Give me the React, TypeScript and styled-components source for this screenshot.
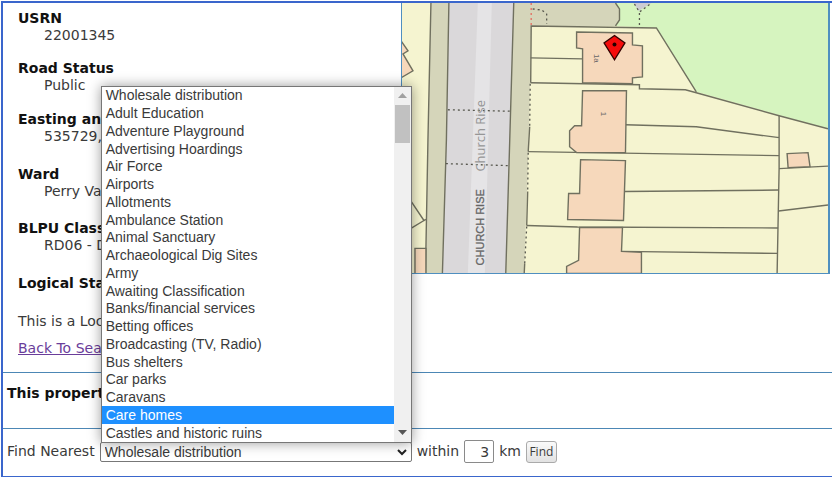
import React, { useState } from "react";
import styled, { createGlobalStyle } from "styled-components";

const GlobalStyle = createGlobalStyle`
  body {
    margin: 0;
    background: #fff;
    color: #3a3a3a;
    font: 14px/17px "DejaVu Sans", Verdana, sans-serif;
  }
  *, *::before, *::after { box-sizing: border-box; }
`;

const Page = styled.main`
  margin: 1px 0 0 1px;
  border: solid #3a66cc;
  border-width: 2px 0 1px 2px;
  overflow: hidden;
`;

const Summary = styled.section`
  display: grid;
  grid-template-columns: minmax(0, 398fr) minmax(0, 429fr);
  align-items: start;
  padding-right: 2px;
`;

const Details = styled.div`
  padding: 7px 0 15px 15px;
`;

const PropertyList = styled.dl`
  margin: 0;
`;

const Property = styled.div<{ $gap: number }>`
  margin-bottom: ${(p) => p.$gap}px;
`;

const Term = styled.dt`
  color: #111;
  font-weight: bold;
`;

const Value = styled.dd`
  margin: 0 0 0 26px;
`;

const Note = styled.p`
  margin: 0 0 10px;
`;

const BackLink = styled.a`
  color: #6a3d9a;
  text-decoration: underline;
`;

const MapFrame = styled.div`
  display: flex;
  border: solid #4f8fc0;
  border-width: 0 2px 1px 1px;
`;

const MapDrawing = styled.svg`
  display: block;
  width: 100%;
  height: auto;
`;

const Status = styled.section`
  border-top: 1px solid #4c87b5;
  padding: 12px 4px 26px;
`;

const Heading = styled.h2`
  margin: 0;
  color: #111;
  font-size: 14px;
  line-height: 17px;
`;

const FindForm = styled.form`
  display: flex;
  align-items: center;
  gap: 5px;
  border-top: 1px solid #4c87b5;
  padding: 11px 4px 13px;
`;

const Picker = styled.div`
  position: relative;
  width: 312px;
  height: 20px;
`;

const TypeSelect = styled.select`
  display: block;
  appearance: none;
  width: 100%;
  height: 20px;
  margin: 0;
  padding: 0 4px;
  border: 1px solid #777;
  border-radius: 2px;
  background: #fff;
  color: #3a3a3a;
  font: 14px "Liberation Sans", Arial, sans-serif;
`;

const SelectArrow = styled.svg`
  position: absolute;
  right: 5px;
  top: 6px;
  pointer-events: none;
`;

const Popup = styled.div`
  position: absolute;
  left: 1px;
  right: 0;
  bottom: 19px;
  display: flex;
  height: 357px;
  border: 1px solid #777;
  background: #fff;
  box-shadow: 0 0 12px rgba(0, 0, 0, 0.4);
`;

const Options = styled.ul`
  flex: 1;
  display: grid;
  grid-auto-rows: 1fr;
  margin: 0;
  padding: 0;
  list-style: none;
`;

const Option = styled.li<{ $active: boolean }>`
  display: flex;
  align-items: center;
  padding-left: 4px;
  background: ${(p) => (p.$active ? "#1e90ff" : "#fff")};
  color: ${(p) => (p.$active ? "#fff" : "#3a3a3a")};
  font: 14px/16px "Liberation Sans", Arial, sans-serif;
  cursor: default;
`;

const ScrollBar = styled.div`
  display: flex;
  flex-direction: column;
  width: 17px;
  padding: 0 1px;
  background: #f0f0f0;
`;

const ScrollButton = styled.button`
  display: grid;
  place-items: center;
  height: 18px;
  padding: 0;
  border: 0;
  background: transparent;
`;

const Thumb = styled.div`
  height: 38px;
  background: #c1c1c1;
`;

const Track = styled.div`
  flex: 1;
`;

const Distance = styled.input`
  width: 30px;
  height: 23px;
  padding: 0 4px;
  border: 1px solid #8a8a8a;
  border-radius: 2px;
  color: #3a3a3a;
  font: 14px "DejaVu Sans", Verdana, sans-serif;
  text-align: right;
`;

const FindButton = styled.button`
  width: 31px;
  height: 22px;
  padding: 0;
  border: 1px solid #aaa;
  border-radius: 3px;
  background: linear-gradient(#fafafa, #e2e2e2);
  color: #3a3a3a;
  font: 12px "Open Sans", sans-serif;
`;

const properties = [
  { term: "USRN", value: "22001345", gap: 16 },
  { term: "Road Status", value: "Public", gap: 17 },
  { term: "Easting and Northing", value: "535729,", gap: 21 },
  { term: "Ward", value: "Perry Vale", gap: 20 },
  { term: "BLPU Classification", value: "RD06 - Dwelling", gap: 21 },
  { term: "Logical Status", value: "", gap: 21 },
];

const types = [
  "Wholesale distribution",
  "Adult Education",
  "Adventure Playground",
  "Advertising Hoardings",
  "Air Force",
  "Airports",
  "Allotments",
  "Ambulance Station",
  "Animal Sanctuary",
  "Archaeological Dig Sites",
  "Army",
  "Awaiting Classification",
  "Banks/financial services",
  "Betting offices",
  "Broadcasting (TV, Radio)",
  "Bus shelters",
  "Car parks",
  "Caravans",
  "Care homes",
  "Castles and historic ruins",
];

function StreetMap() {
  return (
    <MapDrawing viewBox="402 3 427 271" role="img" aria-label="Map of Church Rise">
      <rect x="402" y="3" width="427" height="271" fill="#f5f4d0" />
      <path d="M431 3H449L446.5 140L442.5 274H425.5L428 140Z" fill="#d5d5ba" />
      <path d="M449 3H514L510 140L506 274H442.5L446.5 140Z" fill="#dad8da" />
      <path d="M478 3H492L485 274H468Z" fill="#e5e4e6" />
      <path d="M514 3H616L620 9V20L616 26H531.5L529 140L524.5 274H506L510 140Z" fill="#d5d5ba" />
      <path d="M616 3H829V129L697 92L657 28L616 26L620 20V9Z" fill="#d6f4bf" />
      <path d="M634 3L639 11L652 3Z" fill="#ccccd2" />
      <g fill="none" stroke="#70705f" strokeWidth="1.4">
        <path d="M431 3L428 140L425.5 274M449 3L446.5 140L442.5 274M514 3L510 140L506 274" />
        <path d="M616 3L620 9V20L616 26M531 83L531.5 26L657 28L697 92" />
        <path d="M531 58L583 59M531 83L640 85V89L686 90L697 93L780 116L829 129" />
        <path d="M780 116V169L778 274M626 125L697 127L780 138M528.5 152L780 156" />
        <path d="M625 192L779 190.500M527 226L578 227.500L779 228.500M622 252L778 254" />
        <path d="M780 169L829 166.500M779.500 211.500L829 205.500" />
        <path d="M530 127L528.5 152M528 192L527 226M525 264L524.5 274" />
        <path d="M410 200L424 221L426 220M424 221L411 229" />
      </g>
      <g fill="#f6d8bb" stroke="#70705f" strokeWidth="1.4">
        <path d="M577 32L633 33V45L643 46V77L633 78V84L583 83V49L577 48Z" />
        <path d="M583 91H627L626 153H577L570 147V131L575 126H582Z" />
        <path d="M581 160L626 161L624 221L568 220L569 194H580Z" />
        <path d="M580 228H623L622 252L642 253V274H567V267L579 261Z" />
        <path d="M788 154L809 153L811 167L789 168Z" />
        <path d="M401 41L408 51L403 54L413 71L401 78M415 275V249H426V275" />
      </g>
      <g fill="none" stroke="#57574e" strokeWidth="1.3" strokeDasharray="2 3">
        <path d="M448 110L511 111.500M446 164L508 166M530.5 84L530 127M528.5 153L528 190M527 227L525 264" />
        <path d="M533 9L542 10L547 14V24M635 4L640 12L652 3M640 13V26" />
        <path d="M531.5 3V26" stroke="#e46c60" />
      </g>
      <g fontFamily="Liberation Sans, Arial, sans-serif" fill="#666">
        <text transform="translate(485 172) rotate(-90)" fontFamily="Open Sans, sans-serif" fontSize="13" fill="#969696">Church Rise</text>
        <text transform="translate(484 266) rotate(-90)" fontSize="11" stroke="#666" strokeWidth="0.3">CHURCH RISE</text>
        <text transform="translate(594 54) rotate(90)" fontSize="8">1a</text>
        <text transform="translate(601 112) rotate(90)" fontSize="8">1</text>
      </g>
      <path d="M615 35.500L625.500 43L615 60L604.500 43Z" fill="#f50b0b" stroke="#300" strokeWidth="1.3" />
      <circle cx="615" cy="44.500" r="2" fill="#200" />
    </MapDrawing>
  );
}

export default function App() {
  const [selected, setSelected] = useState(types[0]);
  const [active, setActive] = useState("Care homes");
  const [distance, setDistance] = useState("3");

  return (
    <>
      <GlobalStyle />
      <Page>
        <Summary>
          <Details>
            <PropertyList>
              {properties.map((p) => (
                <Property key={p.term} $gap={p.gap}>
                  <Term>{p.term}</Term>
                  {p.value && <Value>{p.value}</Value>}
                </Property>
              ))}
            </PropertyList>
            <Note>This is a Local Property</Note>
            <BackLink href="#search">Back To Search</BackLink>
          </Details>
          <MapFrame>
            <StreetMap />
          </MapFrame>
        </Summary>
        <Status>
          <Heading>This property</Heading>
        </Status>
        <FindForm onSubmit={(e) => e.preventDefault()}>
          <label htmlFor="type">Find Nearest</label>
          <Picker>
            <TypeSelect id="type" value={selected} onChange={(e) => setSelected(e.target.value)}>
              {types.map((t) => (
                <option key={t}>{t}</option>
              ))}
            </TypeSelect>
            <SelectArrow width="10" height="8" viewBox="0 0 10 8" aria-hidden="true">
              <path d="M1 2L5 6L9 2" fill="none" stroke="#222" strokeWidth="2" />
            </SelectArrow>
            <Popup>
              <Options role="listbox" aria-label="Find Nearest">
                {types.map((t) => (
                  <Option
                    key={t}
                    role="option"
                    aria-selected={t === active}
                    $active={t === active}
                    onMouseEnter={() => setActive(t)}
                    onClick={() => setSelected(t)}
                  >
                    {t}
                  </Option>
                ))}
              </Options>
              <ScrollBar>
                <ScrollButton type="button" aria-label="Scroll up">
                  <svg width="9" height="5" viewBox="0 0 9 5"><path d="M0 5L4.500 0L9 5Z" fill="#a0a0a0" /></svg>
                </ScrollButton>
                <Thumb />
                <Track />
                <ScrollButton type="button" aria-label="Scroll down">
                  <svg width="9" height="5" viewBox="0 0 9 5"><path d="M0 0L4.500 5L9 0Z" fill="#555" /></svg>
                </ScrollButton>
              </ScrollBar>
            </Popup>
          </Picker>
          <label htmlFor="distance">within</label>
          <Distance id="distance" value={distance} onChange={(e) => setDistance(e.target.value)} />
          <span>km</span>
          <FindButton type="submit">Find</FindButton>
        </FindForm>
      </Page>
    </>
  );
}
